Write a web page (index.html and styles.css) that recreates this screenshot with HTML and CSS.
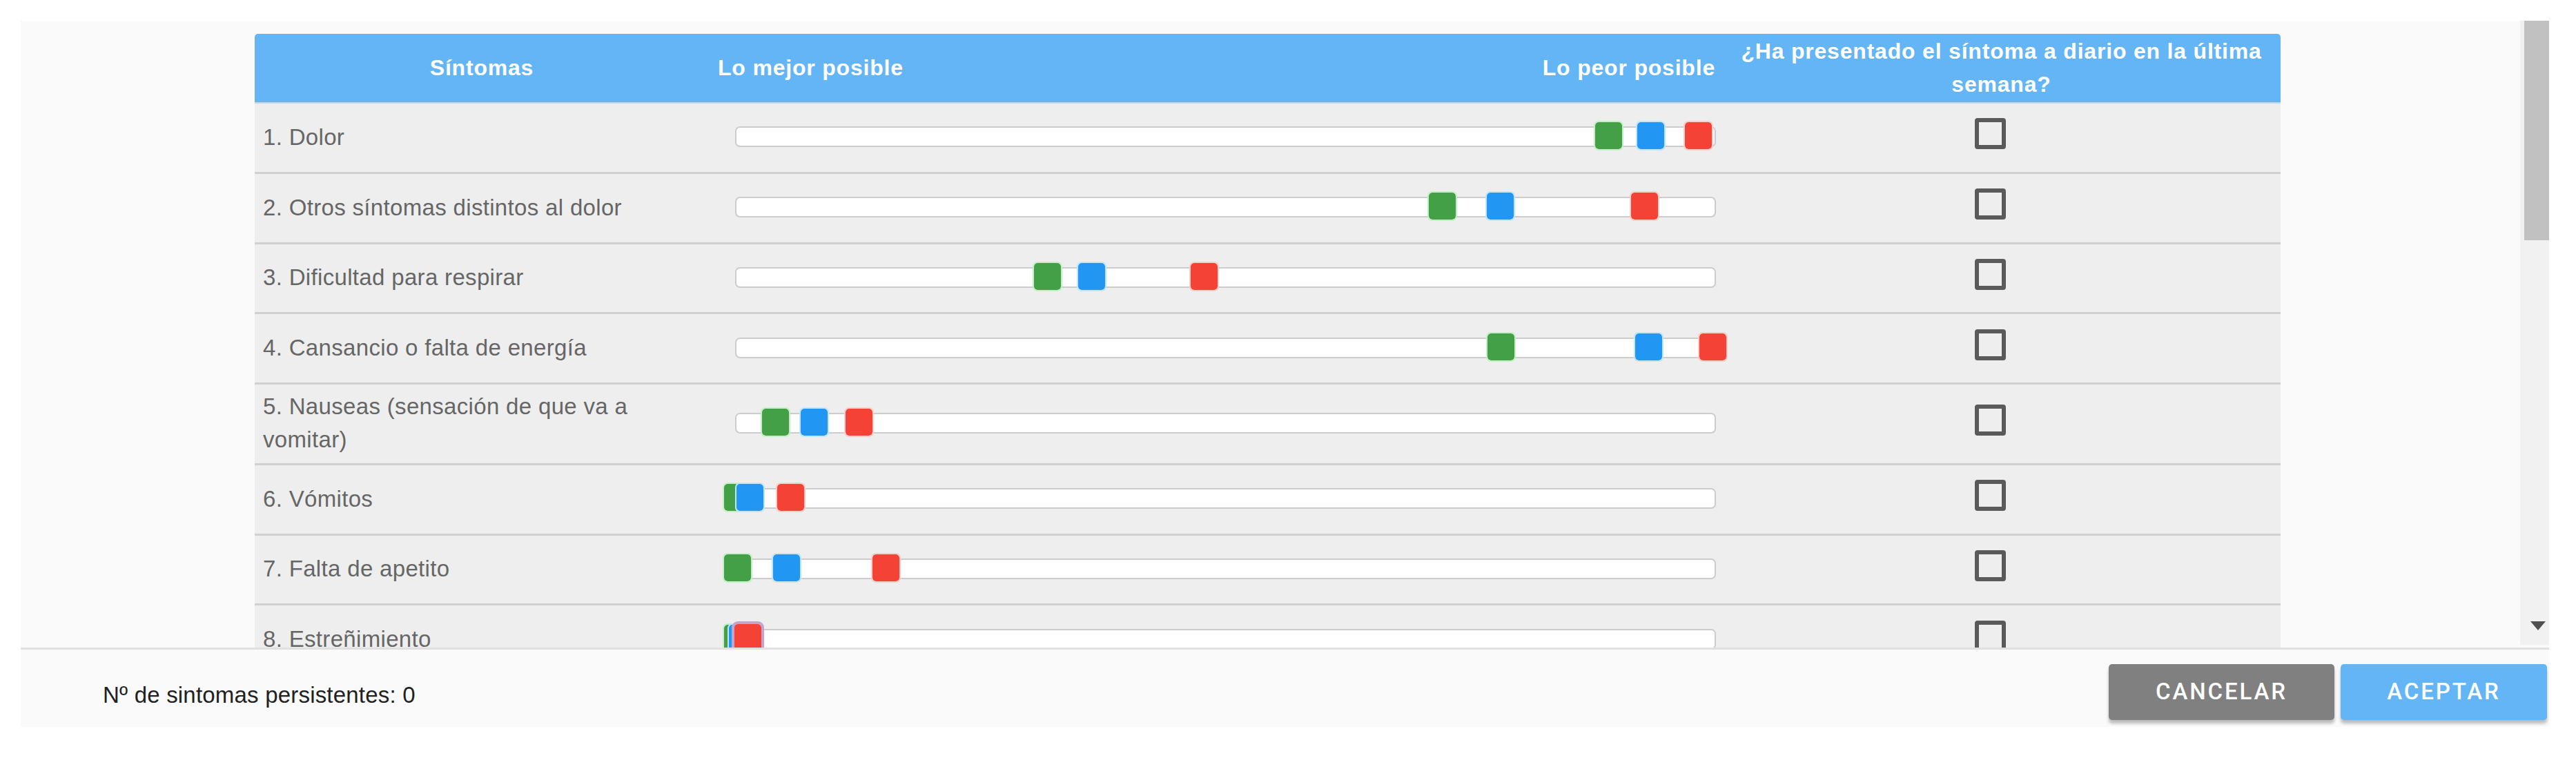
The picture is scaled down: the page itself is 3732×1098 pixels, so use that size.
FILE: index.html
```html
<!DOCTYPE html>
<html lang="es">
<head>
  <meta charset="UTF-8" />
  <title>Síntomas</title>
  <meta name="viewport" content="width=device-width, initial-scale=1.0" />
  <link rel="stylesheet" href="styles.css">
</head>
<body>

<div class="dialogo">
  <div class="contenido">
    <div class="tabla">
      <div class="fila cabecera">
        <div class="col-sintoma"><span>Síntomas</span></div>
        <div class="col-escala"><span>Lo mejor posible</span><span>Lo peor posible</span></div>
        <div class="col-diario"><span>¿Ha presentado el síntoma a diario en la última semana?</span></div>
      </div>
      <div id="filas"></div>
    </div>
    <div class="scroll">
      <div class="scroll-barra"></div>
      <svg class="scroll-flecha" viewBox="0 0 22 13"><path d="M0 0h22L11 13z" fill="#505050"/></svg>
    </div>
  </div>

  <footer>
    <div class="total">Nº de sintomas persistentes: 0</div>
    <div class="botones">
      <button class="cancelar">CANCELAR</button>
      <button class="aceptar">ACEPTAR</button>
    </div>
  </footer>
</div>

<script src="script.js"></script>
</body>
</html>
```
FILE: styles.css
```css
* {
  box-sizing: border-box;
}

body {
  margin: 0;
  padding: 30px 39px 0 30px;
  font-family: "Liberation Sans", Arial, sans-serif;
  background-color: #fff;
  overflow: hidden;
}

.dialogo {
  height: 1023px;
  background-color: #fafafa;
  overflow: hidden;
}

.contenido {
  display: flex;
  justify-content: space-between;
  height: 908px;
  padding-left: 339px;
  overflow: hidden;
}

.tabla {
  width: 2935px;
  margin-top: 19px;
}

.fila {
  display: grid;
  grid-template-columns: 658px 1468px 809px;
  height: 101.8px;
  background-color: #eee;
  border-bottom: 3px solid #d0d0d0;
  color: #666;
  font-size: 33px;
  letter-spacing: 0.33px;
  line-height: 48px;
}

.fila.alta {
  height: 116.6px;
}

.fila > div {
  display: flex;
  align-items: center;
}

.fila .col-sintoma {
  padding: 0 60px 1px 12px;
}

.fila .col-diario {
  justify-content: center;
}

.fila.cabecera {
  height: 101px;
  background-color: #64b5f6;
  border-bottom: 2px solid #b4dafa;
  border-radius: 5px 5px 0 0;
  color: #fff;
  font-weight: bold;
  font-size: 32px;
  letter-spacing: 0.8px;
}

.cabecera .col-sintoma {
  justify-content: center;
  padding: 0 0 2px;
}

.cabecera .col-escala {
  justify-content: space-between;
  padding: 0 10px 2px 13px;
}

.cabecera .col-diario {
  text-align: center;
  padding: 0 12px 2px;
}

.pista {
  position: relative;
  width: 1421px;
  height: 30px;
  margin-left: 38px;
  margin-bottom: 2px;
  background-color: #fff;
  border: 2px solid #ccc;
  border-radius: 7px;
}

.marca {
  position: absolute;
  top: -10px;
  width: 43px;
  height: 43px;
  margin-left: -2px;
  border: 2px solid #fff;
  border-radius: 7px;
  background-clip: padding-box;
}

.verde {
  background-color: #43a047;
  border-color: #c4efc6;
}

.azul {
  background-color: #2196f3;
  border-color: #c0e6ff;
}

.roja {
  background-color: #f44336;
  border-color: #fcccc8;
}

.marca.activa {
  width: 47px;
  height: 48px;
  top: -13px;
  margin-left: -4px;
  border: 4px solid #c2a5c8;
  border-radius: 9px;
}

.casilla {
  width: 45px;
  height: 45px;
  margin: 0 33px 11px 0;
  border: 6px solid #5a5a5a;
  border-radius: 4px;
}

.scroll {
  display: flex;
  flex-direction: column;
  justify-content: space-between;
  align-items: flex-end;
  width: 42px;
  height: 904px;
  background-color: #f1f1f1;
}

.scroll-barra {
  width: 36px;
  height: 318px;
  background-color: #c1c1c1;
}

.scroll-flecha {
  width: 22px;
  height: 13px;
  margin: 0 5px 21px 0;
}

footer {
  display: flex;
  justify-content: space-between;
  height: 115px;
  padding: 21px 3px 0 119px;
  border-top: 3px solid #e0e0e0;
}

.total {
  padding-top: 22px;
  font-size: 33px;
  letter-spacing: 0.2px;
  line-height: 46px;
  color: #212121;
}

.botones {
  display: flex;
  gap: 9px;
}

.botones button {
  height: 81px;
  padding: 0 0 3px;
  border: none;
  border-radius: 5px;
  box-shadow: 0 5px 4px rgba(0, 0, 0, 0.25);
  color: #fff;
  font-family: Roboto, sans-serif;
  font-size: 33px;
  font-weight: 500;
  letter-spacing: 2.9px;
}

.cancelar {
  width: 327px;
  background-color: #808080;
}

.aceptar {
  width: 299px;
  background-color: #64b5f6;
}
```
FILE: script.js
```js
const INICIO = 1067;

// posicion de cada marcador: [verde, azul, roja]
const sintomas = [
  { nombre: "1. Dolor", marcas: [2311, 2372, 2441] },
  { nombre: "2. Otros síntomas distintos al dolor", marcas: [2070, 2154, 2363] },
  { nombre: "3. Dificultad para respirar", marcas: [1498, 1562, 1725] },
  { nombre: "4. Cansancio o falta de energía", marcas: [2155, 2369, 2462] },
  { nombre: "5. Nauseas (sensación de que va a vomitar)", marcas: [1104, 1160, 1225], alta: true },
  { nombre: "6. Vómitos", marcas: [1049, 1067, 1126] },
  { nombre: "7. Falta de apetito", marcas: [1049, 1120, 1264] },
  { nombre: "8. Estreñimiento", marcas: [1049, 1056, 1064], activa: true }
];

const colores = ["verde", "azul", "roja"];
const filas = document.getElementById("filas");

sintomas.forEach(s => {
  const fila = document.createElement("div");
  fila.className = "fila" + (s.alta ? " alta" : "");
  const marcas = s.marcas.map((x, i) => {
    const activa = s.activa && i === 2 ? " activa" : "";
    return `<span class="marca ${colores[i]}${activa}" style="left: ${x - INICIO}px"></span>`;
  }).join("");
  fila.innerHTML = `
    <div class="col-sintoma"><span>${s.nombre}</span></div>
    <div class="col-escala"><div class="pista">${marcas}</div></div>
    <div class="col-diario"><span class="casilla"></span></div>
  `;
  filas.appendChild(fila);
});
```
